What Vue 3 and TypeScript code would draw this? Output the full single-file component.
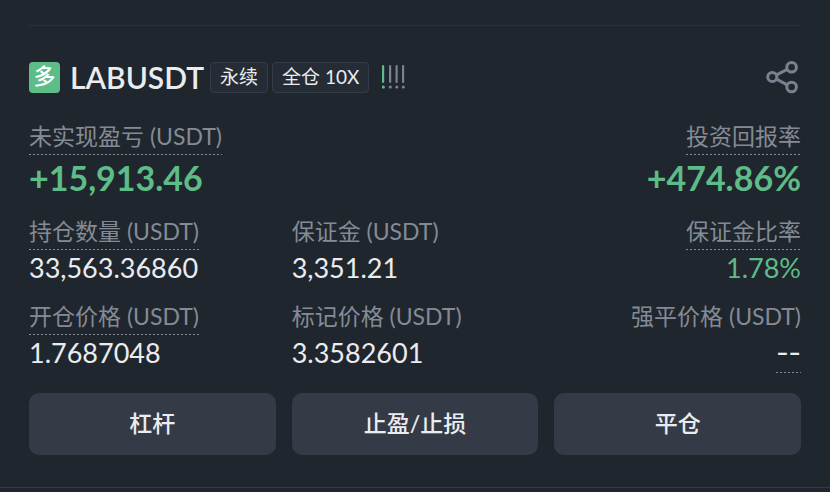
<script setup lang="ts">
interface Stat {
  label: string
  value: string
  hint?: 'label' | 'value'
  tone?: 'gain'
}

const headline: Stat[] = [
  { label: '未实现盈亏 (USDT)', value: '+15,913.46', hint: 'label' },
  { label: '投资回报率', value: '+474.86%', hint: 'label' },
]

const stats: Stat[] = [
  { label: '持仓数量 (USDT)', value: '33,563.36860', hint: 'label' },
  { label: '保证金 (USDT)', value: '3,351.21' },
  { label: '保证金比率', value: '1.78%', hint: 'label', tone: 'gain' },
  { label: '开仓价格 (USDT)', value: '1.7687048', hint: 'label' },
  { label: '标记价格 (USDT)', value: '3.3582601' },
  { label: '强平价格 (USDT)', value: '--', hint: 'value' },
]

const actions: string[] = ['杠杆', '止盈/止损', '平仓']
const riskLevel = 1
</script>

<template>
  <main class="page">
    <article class="position">
      <header class="head">
        <span class="side">多</span>
        <h1 class="symbol">LABUSDT</h1>
        <div class="tags">
          <span class="tag">永续</span>
          <span class="tag">全仓 10X</span>
        </div>
        <svg class="risk" width="24" height="24" viewBox="0 0 24 24" aria-hidden="true">
          <g v-for="n in 4" :key="n" :class="{ active: n <= riskLevel }">
            <rect :x="n * 7 - 7 - (n > 1 ? (n - 2) * 0.5 : 0)" y="0" width="2.2" height="18" rx="1" />
            <circle :cx="n * 7 - 5.7 - (n > 1 ? (n - 2) * 0.5 : 0)" cy="22" r="1.6" />
          </g>
        </svg>
        <button class="share" type="button" aria-label="分享">
          <svg width="34" height="34" viewBox="0 0 34 34" fill="none" stroke="currentColor" stroke-width="3">
            <circle cx="6.3" cy="17" r="4.6" />
            <circle cx="25.6" cy="7.2" r="4.8" />
            <circle cx="25.6" cy="27" r="4.8" />
            <path d="M10.5 14.8 21.2 9.3M10.5 19.2 21.2 24.8" />
          </svg>
        </button>
      </header>

      <dl class="headline">
        <div v-for="item in headline" :key="item.label" class="stat">
          <dt class="label"><span class="hint">{{ item.label }}</span></dt>
          <dd class="figure">{{ item.value }}</dd>
        </div>
      </dl>

      <dl class="grid">
        <div v-for="item in stats" :key="item.label" class="stat">
          <dt class="label"><span :class="{ hint: item.hint === 'label' }">{{ item.label }}</span></dt>
          <dd class="value" :class="[item.tone, { empty: item.value === '--' }]">
            <span :class="{ hint: item.hint === 'value' }">{{ item.value }}</span>
          </dd>
        </div>
      </dl>

      <div class="actions">
        <button v-for="action in actions" :key="action" class="action" type="button">{{ action }}</button>
      </div>
    </article>
  </main>
</template>

<style>
body {
  background: #20262d;
}
</style>

<style scoped>
.page {
  padding: 25px 0 4px;
  color: #eaecef;
  font-family: Lato, "Noto Sans CJK SC", sans-serif;
  border-bottom: 1px solid #333b47;
}

.position {
  margin: 0 29px 28px;
  border-top: 1px solid #2a3139;
}

.head {
  display: flex;
  align-items: center;
  padding-top: 34px;
}

.side {
  width: 31px;
  height: 31px;
  border-radius: 4px;
  background: #5dbc87;
  color: #fff;
  font-size: 22px;
  font-weight: 500;
  line-height: 28px;
  text-align: center;
}

.symbol {
  margin: 0 6px 0 10px;
  font-size: 30px;
  font-weight: 600;
  line-height: 34px;
}

.tags {
  display: flex;
  gap: 4px;
}

.tag {
  height: 29px;
  padding: 0 9px;
  border: 1px solid #343c48;
  border-radius: 4px;
  background: #252c36;
  font-size: 19px;
  line-height: 28px;
}

.risk {
  margin-left: 13px;
  fill: #7a828e;
}

.risk .active {
  fill: #5dbc87;
}

.share {
  display: flex;
  margin-left: auto;
  padding: 0 1px 0 0;
  border: 0;
  background: none;
  color: #79818e;
}

dl,
dd {
  margin: 0;
}

.headline {
  display: flex;
  justify-content: space-between;
  padding-top: 26px;
}

.label {
  height: 36px;
  color: #848b96;
  font-size: 23px;
  line-height: 32px;
}

.hint {
  display: inline-block;
  padding-bottom: 3px;
  background: repeating-linear-gradient(90deg, #848b96 0 2px, transparent 2px 4px) bottom / 100% 1px no-repeat;
}

.figure {
  height: 46px;
  color: #5dbc87;
  font-size: 34px;
  font-weight: 700;
  line-height: 44px;
}

.headline .stat:last-child,
.grid .stat:nth-child(3n) {
  text-align: right;
}

.grid {
  display: grid;
  grid-template-columns: repeat(3, 1fr);
  gap: 9px 16px;
  padding-top: 13px;
}

.value {
  height: 40px;
  font-size: 27px;
  line-height: 34px;
}

.empty {
  font-family: Inter, sans-serif;
}

.gain {
  color: #5dbc87;
}

.actions {
  display: grid;
  grid-template-columns: repeat(3, 1fr);
  gap: 16px;
  padding-top: 17px;
}

.action {
  height: 62px;
  padding: 0 0 4px;
  border: 0;
  border-radius: 10px;
  background: #343b46;
  color: #eaecef;
  font: 500 23px Lato, "Noto Sans CJK SC", sans-serif;
}
</style>
